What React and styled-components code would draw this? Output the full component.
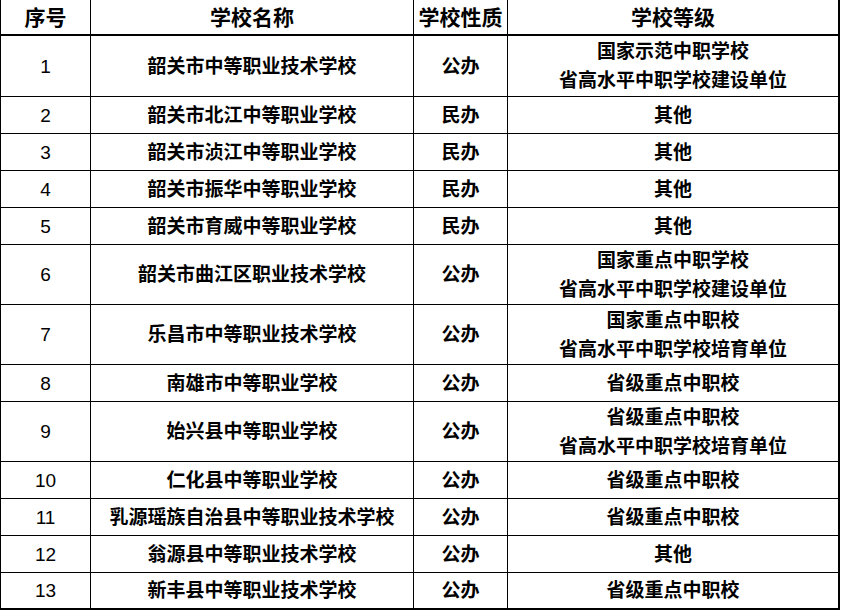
import React from "react";
import styled, { createGlobalStyle } from "styled-components";

const Global = createGlobalStyle`
  html, body { margin: 0; padding: 0; background: #ffffff; }
  body {
    font-family: "Liberation Sans", "Noto Sans CJK SC", sans-serif;
    color: #000;
  }
`;

const COLS = "90px 323px 94px 330px";

const Table = styled.div`
  width: 837px;
  border-left: 1px solid #000;
  border-right: 2px solid #000;
  display: flex;
  flex-direction: column;
`;

const Row = styled.div`
  display: grid;
  grid-template-columns: ${COLS};
  box-sizing: border-box;
  height: ${(p) => p.$h}px;
  border-bottom: ${(p) => p.$bw || 1}px solid #000;
`;

const Cell = styled.div`
  display: flex;
  flex-direction: column;
  align-items: center;
  justify-content: center;
  text-align: center;
  box-sizing: border-box;
  border-right: ${(p) => (p.$last ? "none" : "1px solid #000")};
  font-size: ${(p) => (p.$head ? "21px" : "19px")};
  font-weight: ${(p) => (p.$head ? 700 : p.$num ? 400 : 600)};
  line-height: 29px;
  white-space: nowrap;
  color: #000;
`;

const rows = [
  ["1", "韶关市中等职业技术学校", "公办", ["国家示范中职学校", "省高水平中职学校建设单位"]],
  ["2", "韶关市北江中等职业学校", "民办", ["其他"]],
  ["3", "韶关市浈江中等职业学校", "民办", ["其他"]],
  ["4", "韶关市振华中等职业学校", "民办", ["其他"]],
  ["5", "韶关市育威中等职业学校", "民办", ["其他"]],
  ["6", "韶关市曲江区职业技术学校", "公办", ["国家重点中职学校", "省高水平中职学校建设单位"]],
  ["7", "乐昌市中等职业技术学校", "公办", ["国家重点中职校", "省高水平中职学校培育单位"]],
  ["8", "南雄市中等职业学校", "公办", ["省级重点中职校"]],
  ["9", "始兴县中等职业学校", "公办", ["省级重点中职校", "省高水平中职学校培育单位"]],
  ["10", "仁化县中等职业学校", "公办", ["省级重点中职校"]],
  ["11", "乳源瑶族自治县中等职业技术学校", "公办", ["省级重点中职校"]],
  ["12", "翁源县中等职业技术学校", "公办", ["其他"]],
  ["13", "新丰县中等职业技术学校", "公办", ["省级重点中职校"]],
];

export default function App() {
  return (
    <>
      <Global />
      <Table>
        <Row $h={36} $bw={2}>
          <Cell $head>序号</Cell>
          <Cell $head>学校名称</Cell>
          <Cell $head>学校性质</Cell>
          <Cell $head $last>学校等级</Cell>
        </Row>
        {rows.map((r, i) => {
          const last = i === rows.length - 1;
          const h = i === 0 ? 61 : r[3].length > 1 ? 60 : 37;
          return (
            <Row key={r[0]} $h={h} $bw={last ? 2 : 1}>
              <Cell $num>{r[0]}</Cell>
              <Cell>{r[1]}</Cell>
              <Cell>{r[2]}</Cell>
              <Cell $last>
                {r[3].map((t) => (
                  <span key={t}>{t}</span>
                ))}
              </Cell>
            </Row>
          );
        })}
      </Table>
    </>
  );
}
